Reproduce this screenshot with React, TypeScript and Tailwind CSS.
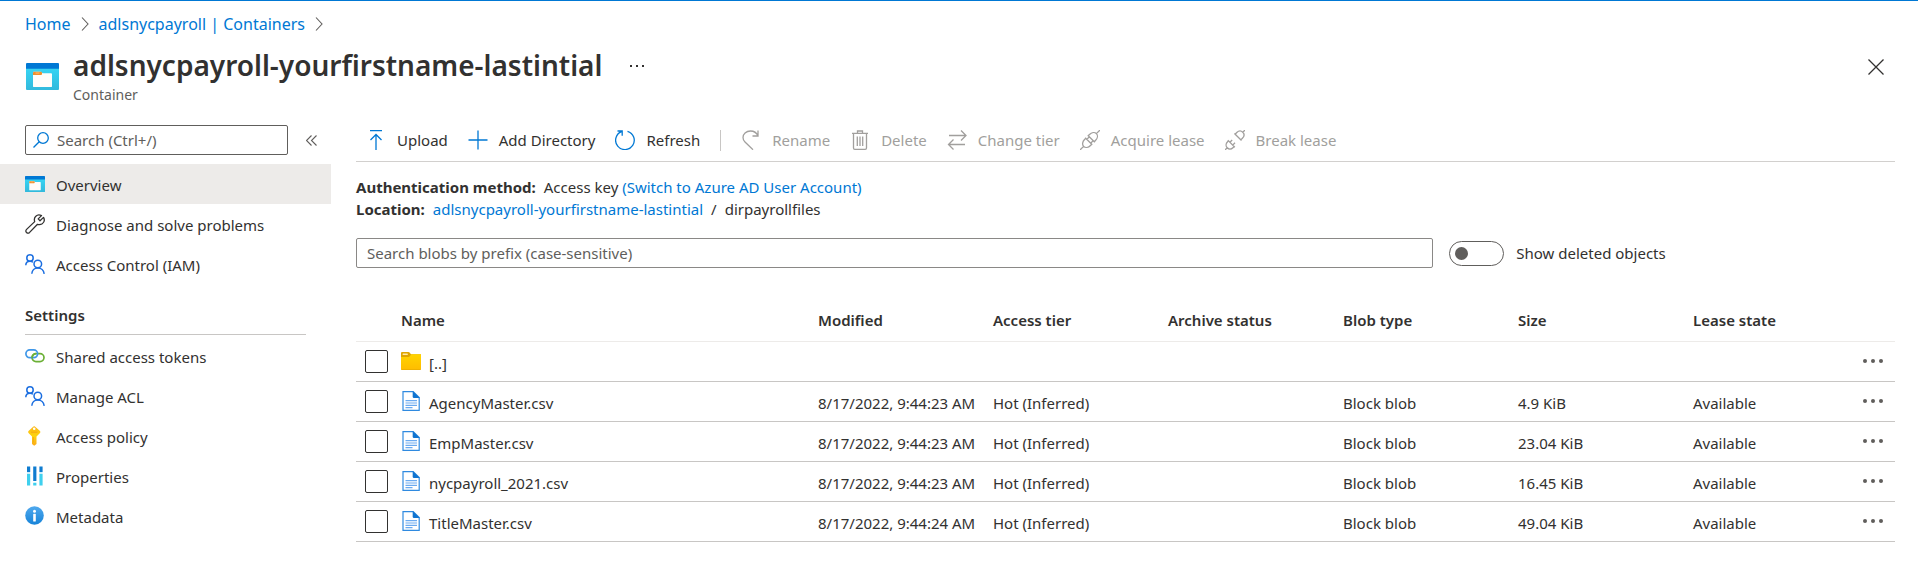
import type { ReactNode } from "react";

type IconProps = { className?: string };

function ContainerIcon({ className }: IconProps) {
  return (
    <svg viewBox="0 0 33 28" className={className} preserveAspectRatio="none" aria-hidden="true">
      <defs>
        <linearGradient id="boxBody" x1="0" y1="0" x2="0" y2="1">
          <stop offset="0" stopColor="#37d6f5" />
          <stop offset="1" stopColor="#32b9dc" />
        </linearGradient>
      </defs>
      <rect x="0" y="4" width="33" height="24" rx="1" fill="url(#boxBody)" />
      <path d="M1 0H32Q33 0 33 1V6H0V1Q0 0 1 0Z" fill="#0078d4" />
      <path d="M7 9.500Q7 9 7.500 9H14.500Q15 9 15.500 9.500L16.500 10.500H25Q26 10.500 26 11.500V24Q26 25 25 25H8Q7 25 7 24Z" fill="#fffdfa" />
      <path d="M7 9.500Q7 9 7.500 9H15Q16 9 16 10V11.500Q16 12.500 15 12.500H7Z" fill="#f08f2c" />
      <rect x="9.500" y="9.800" width="4" height="1.200" fill="#ffb766" />
    </svg>
  );
}

function WrenchIcon({ className }: IconProps) {
  return (
    <svg viewBox="0 0 20 20" className={className} fill="none" stroke="#323130" strokeWidth="1.300" strokeLinejoin="round" aria-hidden="true">
      <path d="M16.500 1.600 13.200 4.900 15 6.800 18.500 3.400C19.800 5.800 19.200 8.300 17.200 9.700 15.700 10.700 14.200 10.900 12.500 10.300L4.600 18.400C3.600 19.300 2.400 19.300 1.500 18.500.600 17.600.600 16.400 1.600 15.400L9.700 7.600C9 5.600 9.400 3.700 10.800 2.300 12.300.700 14.600.500 16.500 1.600Z" />
    </svg>
  );
}

function PeopleIcon({ className }: IconProps) {
  return (
    <svg viewBox="0 0 20 20" className={className} fill="none" stroke="#1b6ee0" strokeWidth="1.500" aria-hidden="true">
      <circle cx="5" cy="4" r="3.200" />
      <path d="M.800 11.300C.800 8.800 2.600 7.200 5 7.200 6.200 7.200 7.200 7.600 8 8.300" />
      <circle cx="12.800" cy="10" r="3.800" />
      <path d="M6.800 19.800C7 16.200 9.500 13.900 12.800 13.900S18.800 16.200 19.200 19.800" />
    </svg>
  );
}

function LinkIcon({ className }: IconProps) {
  return (
    <svg viewBox="0 0 20 20" className={className} fill="none" strokeWidth="1.700" aria-hidden="true">
      <rect x="7" y="7.600" width="12" height="8" rx="4" stroke="#6bb036" />
      <rect x=".900" y="3.900" width="11.700" height="7.800" rx="3.900" stroke="#3f97e8" />
      <path d="M7.100 12.300C7 10 8.500 7.700 11 7.600" stroke="#6bb036" />
    </svg>
  );
}

function KeyIcon({ className }: IconProps) {
  return (
    <svg viewBox="0 0 20 20" className={className} aria-hidden="true">
      <defs>
        <linearGradient id="keyFill" x1="0" y1="0" x2="0" y2="1">
          <stop offset="0" stopColor="#fcb414" />
          <stop offset=".5" stopColor="#fdd40f" />
          <stop offset="1" stopColor="#fba91a" />
        </linearGradient>
      </defs>
      <path d="M8.500 .500Q9.200 0 9.900.500L15 5Q15.800 6 15 7L11.500 10.500V18L9.200 19.700 7 18V10.500L3.500 7Q2.700 6 3.500 5Z" fill="url(#keyFill)" />
      <circle cx="9.200" cy="2.800" r="1.300" fill="#fff" />
      <path d="M6 6.200H12.400M8.200 11V16.500" stroke="#f3a712" strokeWidth="1" />
    </svg>
  );
}

function PropertiesIcon({ className }: IconProps) {
  return (
    <svg viewBox="0 0 20 20" className={className} aria-hidden="true">
      <path d="M2 .500H5.200V6H2ZM8.200.500H11.400V15H8.200ZM14.400.500H17.600V6H14.400Z" fill="#0f7cd0" />
      <path d="M2 8H5.200V19.500H2ZM8.200 16.700H11.400V19.500H8.200ZM14.400 8H17.600V19.500H14.400Z" fill="#3fd0ee" />
      <path d="M2 6H5.200V8H2ZM14.400 6H17.600V8H14.400Z" fill="#cdeffa" />
    </svg>
  );
}

function InfoIcon({ className }: IconProps) {
  return (
    <svg viewBox="0 0 20 20" className={className} aria-hidden="true">
      <defs>
        <linearGradient id="infoFill" x1="0" y1="0" x2="0" y2="1">
          <stop offset="0" stopColor="#50a9ee" />
          <stop offset="1" stopColor="#1683d8" />
        </linearGradient>
      </defs>
      <circle cx="9.500" cy="9.500" r="9.300" fill="url(#infoFill)" />
      <circle cx="9.500" cy="5.300" r="1.500" fill="#fff" />
      <rect x="8.200" y="7.800" width="2.600" height="7.700" rx=".600" fill="#fff" />
    </svg>
  );
}

function FolderIcon() {
  return (
    <svg viewBox="0 0 20 18" className="h-[18px] w-5" aria-hidden="true">
      <defs>
        <linearGradient id="folderFill" x1="0" y1="0" x2="0" y2="1">
          <stop offset="0" stopColor="#ffd400" />
          <stop offset="1" stopColor="#ffbd00" />
        </linearGradient>
      </defs>
      <path d="M0 1Q0 0 1 0H7.500Q8.300 0 8.800.700L10 2.200H19.500Q20 2.200 20 2.700V17Q20 18 19 18H1Q0 18 0 17Z" fill="#dfa500" />
      <path d="M0 5H8L10.500 2.200H20V17Q20 17.500 19.500 17.500H.500Q0 17.500 0 17Z" fill="url(#folderFill)" />
      <rect x="1.600" y="1.600" width="5.200" height="1.300" rx=".500" fill="#ffe9a8" />
    </svg>
  );
}

function FileIcon() {
  return (
    <svg viewBox="0 0 18 20" className="h-5 w-[18px]" aria-hidden="true">
      <path d="M1 .600H11.200L17.200 6.500V19.400H1Z" fill="#fff" stroke="#2f8ae0" strokeWidth="1.200" />
      <path d="M10.700 0 17.800 7H12Q10.700 7 10.700 5.700Z" fill="#0f74d0" />
      <path d="M3.500 9.700H15M3.500 12H15M3.500 14.300H15M3.500 16.600H10.500" stroke="#6aaaf0" strokeWidth="1.200" />
    </svg>
  );
}

function Stroke({ children }: { children: ReactNode }) {
  return (
    <svg viewBox="0 0 20 20" className="size-5 shrink-0" fill="none" stroke="currentColor" strokeWidth="1.300" aria-hidden="true">
      {children}
    </svg>
  );
}

const uploadIcon = (
  <Stroke>
    <path d="M4 .700H16M10 20V4.500M4.500 10 10 4.500 15.500 10" />
  </Stroke>
);
const plusIcon = (
  <Stroke>
    <path d="M10 .500V19.500M.500 10H19.500" />
  </Stroke>
);
const refreshIcon = (
  <Stroke>
    <path d="M12.500 1.300A9.300 9.300 0 1 1 6.500 1.600M2.500 1H7.200V5.800" />
  </Stroke>
);
const renameIcon = (
  <Stroke>
    <path d="M17 .500V6H11.500M17 6C15.500 2.500 12.500 1 9.500 1 5 1 2 4.300 2 7.500 2 9.500 2.800 10.800 4 12L12 19.700" />
  </Stroke>
);
const deleteIcon = (
  <Stroke>
    <path d="M2 3.300H18M7.500 3V1H12.500V3M3.500 3.500V18Q3.500 19.300 4.800 19.300H15.200Q16.500 19.300 16.500 18V3.500M7.300 6.500V16M10 6.500V16M12.700 6.500V16" />
  </Stroke>
);
const tierIcon = (
  <Stroke>
    <path d="M2 5.500H19M14 .500 19 5.500 14 10.500M18 14.500H1.500M6.500 9.500 1.500 14.500 6.500 19.500" />
  </Stroke>
);
const acquireIcon = (
  <Stroke>
    <g transform="rotate(-45 10 10)">
      <path d="M-4 10H1M19 10H24M8.200 5V15M11.800 5V15M8.200 5.800H6.500C3.500 5.800 1 7.600 1 10S3.500 14.200 6.500 14.200H8.200M11.800 5.800H13.500C16.500 5.800 19 7.600 19 10S16.500 14.200 13.500 14.200H11.800M8.200 7.300H11.800M8.200 12.700H11.800" />
    </g>
  </Stroke>
);
const breakIcon = (
  <Stroke>
    <g transform="rotate(-45 10 10)">
      <path d="M-4 10H-1M21 10H24M4.800 5V15M14.200 5V15M4.800 6H3.500C1 6-1 7.600-1 10S1 14 3.500 14H4.800M14.200 6H16.500C19 6 21 7.600 21 10S19 14 16.500 14H14.200M4.800 8H8M4.800 12H8" />
    </g>
  </Stroke>
);

const actions = [
  { label: "Upload", icon: uploadIcon },
  { label: "Add Directory", icon: plusIcon },
  { label: "Refresh", icon: refreshIcon },
];

const blobActions = [
  { label: "Rename", icon: renameIcon },
  { label: "Delete", icon: deleteIcon },
  { label: "Change tier", icon: tierIcon },
  { label: "Acquire lease", icon: acquireIcon },
  { label: "Break lease", icon: breakIcon },
];

const mainLinks = [
  { label: "Overview", icon: <ContainerIcon className="h-4 w-5" />, active: true },
  { label: "Diagnose and solve problems", icon: <WrenchIcon className="size-5" /> },
  { label: "Access Control (IAM)", icon: <PeopleIcon className="size-5" /> },
];

const settingLinks = [
  { label: "Shared access tokens", icon: <LinkIcon className="size-5" /> },
  { label: "Manage ACL", icon: <PeopleIcon className="size-5" /> },
  { label: "Access policy", icon: <KeyIcon className="size-5" /> },
  { label: "Properties", icon: <PropertiesIcon className="size-5" /> },
  { label: "Metadata", icon: <InfoIcon className="size-5" /> },
];

const files = [
  { name: "AgencyMaster.csv", modified: "8/17/2022, 9:44:23 AM", size: "4.9 KiB" },
  { name: "EmpMaster.csv", modified: "8/17/2022, 9:44:23 AM", size: "23.04 KiB" },
  { name: "nycpayroll_2021.csv", modified: "8/17/2022, 9:44:23 AM", size: "16.45 KiB" },
  { name: "TitleMaster.csv", modified: "8/17/2022, 9:44:24 AM", size: "49.04 KiB" },
];

function Chevron() {
  return (
    <svg viewBox="0 0 8 14" className="h-3.5 w-2 shrink-0" fill="none" stroke="#605e5c" strokeWidth="1.100" aria-hidden="true">
      <path d="M1 .500 7 7 1 13.500" />
    </svg>
  );
}

function NavLink({ label, icon, active }: { label: string; icon: ReactNode; active?: boolean }) {
  return (
    <li>
      <a
        href="#"
        aria-current={active ? "page" : undefined}
        className={active ? "flex h-10 items-center gap-[11px] bg-[#edebe9] pl-[25px]" : "flex h-10 items-center gap-[11px] pl-[25px]"}
      >
        <span className="flex w-5 shrink-0 justify-center">{icon}</span>
        <span className="pt-0.5">{label}</span>
      </a>
    </li>
  );
}

function FileRow({ name, icon, cells }: { name: string; icon: ReactNode; cells: string[] }) {
  return (
    <tr className="h-10 border-b border-[#c8c6c4]">
      <td className="pl-[9px]">
        <input
          type="checkbox"
          aria-label={`Select ${name}`}
          className="block size-[23px] appearance-none rounded-[2px] border border-[#323130] bg-white"
        />
      </td>
      <td className="pl-px">
        <a href="#" className="flex items-center gap-2">
          <span className="flex w-5 shrink-0 justify-center">{icon}</span>
          <span className="pt-1">{name}</span>
        </a>
      </td>
      {cells.map((cell, i) => (
        <td key={i} className="pt-1">
          {cell}
        </td>
      ))}
      <td>
        <button type="button" aria-label={`Actions for ${name}`} className="block">
          <svg viewBox="0 0 20 4" className="h-1 w-5" fill="#605e5c" aria-hidden="true">
            <circle cx="2" cy="2" r="2" />
            <circle cx="10" cy="2" r="2" />
            <circle cx="18" cy="2" r="2" />
          </svg>
        </button>
      </td>
    </tr>
  );
}

export default function App() {
  return (
    <div className="min-h-screen border-t border-[#0078d4] bg-white font-['Noto_Sans',sans-serif] text-[15px] leading-[22px] text-[#323130]">
      <nav aria-label="Breadcrumb" className="flex items-center gap-2.5 pt-3 pl-[25px] text-base leading-[22px] text-[#0078d4]">
        <a href="#">Home</a>
        <Chevron />
        <a href="#">adlsnycpayroll | Containers</a>
        <Chevron />
      </nav>

      <header className="flex items-start pt-2.5 pr-[34px] pl-[26px]">
        <ContainerIcon className="mt-[18px] h-[27px] w-[33px]" />
        <div className="ml-3.5">
          <h1 className="text-[28px] leading-10 font-semibold">adlsnycpayroll-yourfirstname-lastintial</h1>
          <p className="text-sm leading-5 text-[#605e5c]">Container</p>
        </div>
        <button type="button" aria-label="More" className="mt-5 ml-7">
          <svg viewBox="0 0 14 2" className="h-0.5 w-3.5" fill="#323130" aria-hidden="true">
            <path d="M0 0H2V2H0ZM6 0H8V2H6ZM12 0H14V2H12Z" />
          </svg>
        </button>
        <button type="button" aria-label="Close" className="mt-3.5 ml-auto">
          <svg viewBox="0 0 16 16" className="size-4" fill="none" stroke="#323130" strokeWidth="1.300" aria-hidden="true">
            <path d="M.500.500 15.500 15.500M15.500.500.500 15.500" />
          </svg>
        </button>
      </header>

      <div className="flex pt-5">
        <aside className="w-[331px] shrink-0">
          <div className="flex items-center pl-[25px]">
            <label className="flex h-[30px] w-[263px] items-center gap-2 rounded-[2px] border border-[#605e5c] pl-[7px]">
              <svg viewBox="0 0 16 16" className="size-4 shrink-0" fill="none" stroke="#0078d4" strokeWidth="1.300" aria-hidden="true">
                <circle cx="10" cy="6" r="5.300" />
                <path d="M6.200 9.800.500 15.500" />
              </svg>
              <input type="text" aria-label="Search menu" placeholder="Search (Ctrl+/)" className="w-full outline-none placeholder:text-[#605e5c]" />
            </label>
            <button type="button" aria-label="Collapse menu" className="ml-[18px]">
              <svg viewBox="0 0 11 11" className="size-[11px]" fill="none" stroke="#605e5c" strokeWidth="1.100" aria-hidden="true">
                <path d="M5.500.500.500 5.500 5.500 10.500M10.500.500 5.500 5.500 10.500 10.500" />
              </svg>
            </button>
          </div>
          <ul className="pt-[9px]">
            {mainLinks.map((link) => (
              <NavLink key={link.label} {...link} />
            ))}
          </ul>
          <h2 className="mr-[25px] ml-[25px] border-b border-[#c8c6c4] pt-5 pb-2 font-semibold">Settings</h2>
          <ul className="pt-px">
            {settingLinks.map((link) => (
              <NavLink key={link.label} {...link} />
            ))}
          </ul>
        </aside>

        <main className="min-w-0 flex-1 pr-[23px] pl-[25px]">
          <div className="flex h-[37px] items-center gap-5 border-b border-[#d2d0ce] pb-1.5 pl-2.5">
            {actions.map((a) => (
              <button key={a.label} type="button" className="flex items-center gap-[11px]">
                <span className="text-[#0078d4]">{a.icon}</span>
                {a.label}
              </button>
            ))}
            <span className="h-[21px] w-px bg-[#c8c6c4]" />
            {blobActions.map((a) => (
              <button key={a.label} type="button" disabled className="flex items-center gap-[11px] text-[#a19f9d]">
                {a.icon}
                {a.label}
              </button>
            ))}
          </div>

          <div className="pt-3.5">
            <p>
              <strong className="mr-2 font-bold">Authentication method:</strong>
              Access key <a href="#" className="text-[#0078d4]">(Switch to Azure AD User Account)</a>
            </p>
            <p>
              <strong className="mr-2 font-bold">Location:</strong>
              <a href="#" className="text-[#0078d4]">adlsnycpayroll-yourfirstname-lastintial</a>
              <span className="px-2">/</span>
              dirpayrollfiles
            </p>
          </div>

          <div className="flex items-center pt-[18px]">
            <input
              type="text"
              aria-label="Search blobs by prefix"
              placeholder="Search blobs by prefix (case-sensitive)"
              className="h-[30px] w-[70%] rounded-[2px] border border-[#8a8886] px-2.5 outline-none placeholder:text-[#605e5c]"
            />
            <label className="ml-4 flex items-center gap-3">
              <input
                type="checkbox"
                role="switch"
                className="flex h-[25px] w-[55px] appearance-none items-center rounded-full border border-[#605e5c] pl-[5px] before:size-[13px] before:rounded-full before:bg-[#605e5c]"
              />
              Show deleted objects
            </label>
          </div>

          <table className="mt-[31px] w-full table-fixed border-collapse text-left">
            <colgroup>
              <col className="w-11" />
              <col />
              <col className="w-[175px]" />
              <col className="w-[175px]" />
              <col className="w-[175px]" />
              <col className="w-[175px]" />
              <col className="w-[175px]" />
              <col className="w-[170px]" />
              <col className="w-8" />
            </colgroup>
            <thead>
              <tr className="h-[42px] border-b border-[#edebe9]">
                <td />
                <th className="pl-px font-semibold">Name</th>
                <th className="font-semibold">Modified</th>
                <th className="font-semibold">Access tier</th>
                <th className="font-semibold">Archive status</th>
                <th className="font-semibold">Blob type</th>
                <th className="font-semibold">Size</th>
                <th className="font-semibold">Lease state</th>
                <td />
              </tr>
            </thead>
            <tbody>
              <FileRow name="[..]" icon={<FolderIcon />} cells={["", "", "", "", "", ""]} />
              {files.map((f) => (
                <FileRow
                  key={f.name}
                  name={f.name}
                  icon={<FileIcon />}
                  cells={[f.modified, "Hot (Inferred)", "", "Block blob", f.size, "Available"]}
                />
              ))}
            </tbody>
          </table>
        </main>
      </div>
    </div>
  );
}
